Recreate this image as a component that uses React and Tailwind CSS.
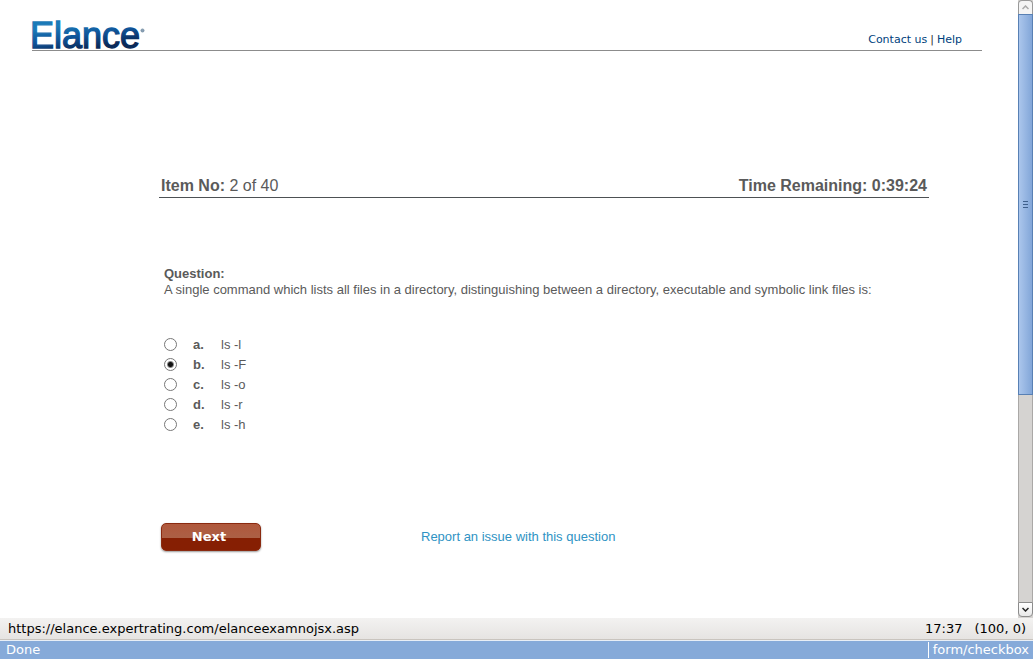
import { useState } from 'react';

const OPTIONS = [
  { id: 'a', text: 'ls -l' },
  { id: 'b', text: 'ls -F' },
  { id: 'c', text: 'ls -o' },
  { id: 'd', text: 'ls -r' },
  { id: 'e', text: 'ls -h' },
];

function Logo() {
  return (
    <svg className="-mb-3 -ml-1" width="124" height="48" viewBox="0 -6 124 48" role="img" aria-label="Elance">
      <defs>
        <linearGradient id="logo" gradientUnits="userSpaceOnUse" x1="50" y1="3" x2="54" y2="29">
          <stop offset="0" stopColor="#1a7ab8" />
          <stop offset="0.5" stopColor="#0f5499" />
          <stop offset="1" stopColor="#0a2a5a" />
        </linearGradient>
      </defs>
      <text x="2" y="28" fontSize="36" fontFamily="'Liberation Sans', sans-serif" fill="url(#logo)" stroke="url(#logo)" strokeWidth="1.3">
        Elance
      </text>
      <circle cx="114.5" cy="10.5" r="1.6" fill="#8aa0b4" stroke="#5d7a94" strokeWidth="0.6" />
    </svg>
  );
}

function Header() {
  return (
    <header className="flex h-[51px] items-end justify-between border-b border-[#8c8c8c]">
      <Logo />
      <nav className="mr-5 flex gap-[3px] pb-[3px] font-['DejaVu_Sans',sans-serif] text-[11px] leading-[15px] text-[#003f7d]">
        <a href="#contact">Contact us</a>
        <span className="text-[#333333]">|</span>
        <a href="#help">Help</a>
      </nav>
    </header>
  );
}

function Scrollbar() {
  return (
    <div className="flex w-[15px] shrink-0 flex-col bg-[#d5d3d1]" aria-hidden="true">
      <div className="flex h-[14px] items-center justify-center rounded-t border border-b-0 border-[#999999] bg-[#f4f4f4]">
        <svg width="7" height="5" viewBox="0 0 7 5" fill="none" stroke="#aaaaaa" strokeWidth="1.5">
          <path d="M.5 4 3.5 1l3 3" />
        </svg>
      </div>
      <div className="flex grow-[381] basis-0 flex-col items-center justify-center gap-[2px] border border-[#5880b4] bg-linear-to-r from-[#abc6ec] to-[#82a6d8]">
        <span className="h-px w-[5px] bg-[#3f608c]" />
        <span className="h-px w-[5px] bg-[#3f608c]" />
        <span className="h-px w-[5px] bg-[#3f608c]" />
      </div>
      <div className="grow-[208] basis-0 border-x border-[#aaa8a6]" />
      <div className="mb-px flex h-[15px] items-center justify-center rounded-b border border-[#8c8c8c] bg-linear-to-b from-white to-[#e8e8e8]">
        <svg width="7" height="5" viewBox="0 0 7 5" fill="none" stroke="#222222" strokeWidth="1.5">
          <path d="M.5 1 3.5 4l3-3" />
        </svg>
      </div>
    </div>
  );
}

function Option({ option, checked, onChange }) {
  return (
    <label className="flex h-5 items-center leading-[18px]">
      <input
        type="radio"
        name="answer"
        value={option.id}
        checked={checked}
        onChange={onChange}
        className="mr-4 size-[13px] appearance-none rounded-full border border-[#777777] bg-white checked:bg-[radial-gradient(circle,#111111_0_2px,transparent_4px)]"
      />
      <span className="w-7 pt-px font-bold">{option.id}.</span>
      <span className="pt-px">{option.text}</span>
    </label>
  );
}

export default function App() {
  const [answer, setAnswer] = useState('b');
  return (
    <div className="flex min-h-screen flex-col bg-white font-['Liberation_Sans',sans-serif] text-[13px] leading-4 text-[#5a5a5a]">
      <div className="flex grow">
        <div className="grow pr-9 pl-8">
          <Header />
          <main className="mt-[124px] mr-[53px] ml-[127px]">
            <div className="flex justify-between border-b border-[#4d5154] px-[2px] text-base leading-[22px]">
              <p>
                <b>Item No:</b> 2 of 40
              </p>
              <b>Time Remaining: 0:39:24</b>
            </div>
            <form onSubmit={(e) => e.preventDefault()}>
              <fieldset className="mt-[68px] px-[5px]">
                <legend className="font-bold">Question:</legend>
                <p>
                  A single command which lists all files in a directory, distinguishing between a directory, executable and
                  symbolic link files is:
                </p>
                <div className="mt-9">
                  {OPTIONS.map((o) => (
                    <Option key={o.id} option={o} checked={answer === o.id} onChange={() => setAnswer(o.id)} />
                  ))}
                </div>
              </fieldset>
              <div className="mt-[89px] flex items-center gap-40 px-[2px]">
                <button
                  type="submit"
                  className="h-7 w-[100px] rounded-[5px] border border-[#8a2a10] bg-linear-to-b from-[#b0583c] from-0% via-[#ab6046] via-55% to-[#861f03] to-55% pr-1 font-['DejaVu_Sans',sans-serif] text-[13px] font-bold text-white shadow-[0_1px_2px_#999999]"
                >
                  Next
                </button>
                <a href="#report" className="text-[#2f93c4]">
                  Report an issue with this question
                </a>
              </div>
            </form>
          </main>
        </div>
        <Scrollbar />
      </div>
      <footer className="font-['DejaVu_Sans',sans-serif] text-[13px]">
        <div className="flex h-[22px] items-center justify-between border-b border-[#c9c4be] bg-linear-to-b from-[#f3f2f1] to-[#e6e4e2] pr-[7px] pl-2 text-black">
          <span>https://elance.expertrating.com/elanceexamnojsx.asp</span>
          <span className="flex gap-3">
            <span>17:37</span>
            <span>(100, 0)</span>
          </span>
        </div>
        <div className="flex h-[19px] items-center justify-between border-t border-[#e8eef6] bg-[#86aad9] pr-1 pl-[6px] text-white">
          <span>Done</span>
          <span className="border-l border-white pl-1">form/checkbox</span>
        </div>
      </footer>
    </div>
  );
}
